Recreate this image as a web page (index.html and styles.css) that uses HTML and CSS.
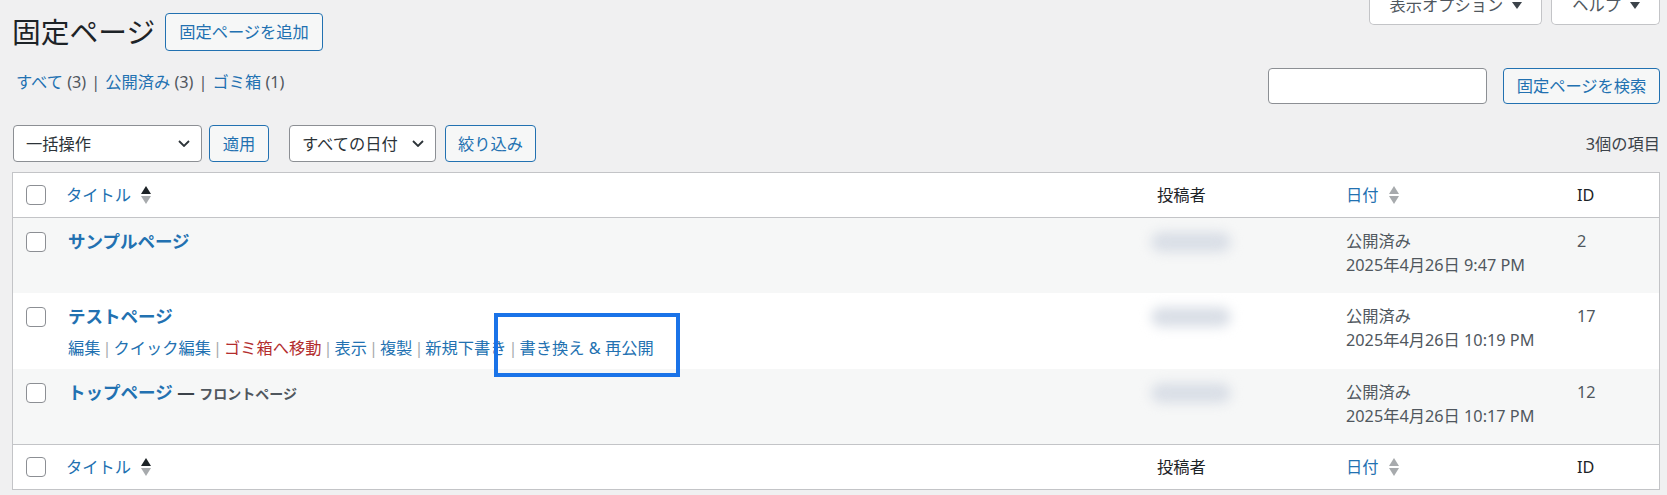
FILE: index.html
```html
<!DOCTYPE html>
<html lang="ja">
<head>
    <meta charset="UTF-8">
    <title>固定ページ</title>
    <link rel="stylesheet" href="styles.css">
</head>
<body>
<div class="wrap">
    <!-- Cabeçalho da página -->
    <div class="page-head">
        <h1 class="page-title">固定ページ</h1>
        <a class="title-action" href="#">固定ページを追加</a>
        <div class="screen-meta">
            <button class="meta-toggle">表示オプション<svg class="meta-arrow" viewBox="0 0 10 7"><path d="M0 0h10L5 7z"/></svg></button>
            <button class="meta-toggle">ヘルプ<svg class="meta-arrow" viewBox="0 0 10 7"><path d="M0 0h10L5 7z"/></svg></button>
        </div>
    </div>

    <div class="views-row">
        <ul class="subsubsub">
            <li><a href="#">すべて <span class="count">(3)</span></a><span class="sep">|</span></li>
            <li><a href="#">公開済み <span class="count">(3)</span></a><span class="sep">|</span></li>
            <li><a href="#">ゴミ箱 <span class="count">(1)</span></a></li>
        </ul>
        <form class="search-box">
            <input type="search" class="search-input">
            <button type="button" class="btn search-btn">固定ページを検索</button>
        </form>
    </div>

    <div class="tablenav">
        <div class="fake-select bulk">一括操作<svg class="chev" viewBox="0 0 12 7"><path d="M1 1l5 5 5-5"/></svg></div>
        <button class="btn apply-btn">適用</button>
        <div class="fake-select dates">すべての日付<svg class="chev" viewBox="0 0 12 7"><path d="M1 1l5 5 5-5"/></svg></div>
        <button class="btn filter-btn">絞り込み</button>
        <span class="num-items">3個の項目</span>
    </div>

    <table class="list-table">
        <thead>
            <tr>
                <th class="col-cb"><span class="cb"></span></th>
                <th class="col-title"><a href="#" class="sort-link">タイトル<svg class="sort-ind" viewBox="0 0 10 18"><path class="up" d="M5 0l5 8H0z"/><path class="down" d="M0 10h10l-5 8z"/></svg></a></th>
                <th class="col-author">投稿者</th>
                <th class="col-date"><a href="#" class="sort-link">日付<svg class="sort-ind" viewBox="0 0 10 18"><path class="down" d="M5 0l5 8H0z"/><path class="down" d="M0 10h10l-5 8z"/></svg></a></th>
                <th class="col-id">ID</th>
            </tr>
        </thead>
        <tbody>
            <tr class="alt">
                <td class="col-cb"><span class="cb"></span></td>
                <td class="col-title"><strong><a href="#" class="row-title">サンプルページ</a></strong></td>
                <td class="col-author"><span class="blurred"></span></td>
                <td class="col-date">公開済み<br>2025年4月26日 9:47 PM</td>
                <td class="col-id">2</td>
            </tr>
            <tr>
                <td class="col-cb"><span class="cb"></span></td>
                <td class="col-title">
                    <strong><a href="#" class="row-title">テストページ</a></strong>
                    <div class="row-actions">
                        <a href="#">編集</a><span class="sep">|</span><a href="#">クイック編集</a><span class="sep">|</span><a href="#" class="trash">ゴミ箱へ移動</a><span class="sep">|</span><a href="#">表示</a><span class="sep">|</span><a href="#">複製</a><span class="sep">|</span><a href="#">新規下書き</a><span class="sep">|</span><a href="#">書き換え &amp; 再公開</a>
                    </div>
                </td>
                <td class="col-author"><span class="blurred"></span></td>
                <td class="col-date">公開済み<br>2025年4月26日 10:19 PM</td>
                <td class="col-id">17</td>
            </tr>
            <tr class="alt">
                <td class="col-cb"><span class="cb"></span></td>
                <td class="col-title"><strong><a href="#" class="row-title">トップページ</a><span class="dash"> — </span><span class="post-state">フロントページ</span></strong></td>
                <td class="col-author"><span class="blurred"></span></td>
                <td class="col-date">公開済み<br>2025年4月26日 10:17 PM</td>
                <td class="col-id">12</td>
            </tr>
        </tbody>
        <tfoot>
            <tr>
                <th class="col-cb"><span class="cb"></span></th>
                <th class="col-title"><a href="#" class="sort-link">タイトル<svg class="sort-ind" viewBox="0 0 10 18"><path class="up" d="M5 0l5 8H0z"/><path class="down" d="M0 10h10l-5 8z"/></svg></a></th>
                <th class="col-author">投稿者</th>
                <th class="col-date"><a href="#" class="sort-link">日付<svg class="sort-ind" viewBox="0 0 10 18"><path class="down" d="M5 0l5 8H0z"/><path class="down" d="M0 10h10l-5 8z"/></svg></a></th>
                <th class="col-id">ID</th>
            </tr>
        </tfoot>
    </table>
</div>

<!-- Destaque em volta da ação -->
<div class="callout"></div>
</body>
</html>
```

FILE: styles.css
```css
/* Base */
body {
    margin: 0;
    position: relative;
    background-color: #f0f0f1;
    color: #3c434a;
    font-family: "Noto Sans", "Noto Sans CJK JP", sans-serif;
    font-size: 16.25px;
    line-height: 24px;
    overflow: hidden;
}
a {
    color: #2271b1;
    text-decoration: none;
}
.wrap {
    padding: 0 7px 0 12px;
}

/* Cabeçalho */
.page-head {
    display: flex;
    align-items: flex-start;
}
.page-title {
    margin: 13px 0 0 0;
    font-size: 28.75px;
    font-weight: 400;
    line-height: 38px;
    color: #1d2327;
}
.title-action {
    margin: 13px 0 0 10px;
    height: 38px;
    box-sizing: border-box;
    padding: 0 13px;
    line-height: 36px;
    border: 1px solid #2271b1;
    border-radius: 4px;
    background-color: #f6f7f7;
    font-size: 16.25px;
}
.screen-meta {
    display: flex;
    gap: 9px;
    margin: -13px 0 0 auto;
}
.meta-toggle {
    display: flex;
    align-items: flex-start;
    height: 38px;
    box-sizing: border-box;
    padding: 6px 19px 0 20px;
    background-color: #fff;
    border: 1px solid #c3c4c7;
    border-top: none;
    border-radius: 0 0 5px 5px;
    font-family: inherit;
    font-size: 16.25px;
    line-height: 24px;
    color: #50575e;
    white-space: nowrap;
}
.meta-arrow {
    flex: none;
    width: 10px;
    height: 7px;
    margin: 9px 0 0 9px;
    fill: #3c434a;
}

/* Filtros e busca */
.views-row {
    display: flex;
    align-items: flex-start;
    margin-top: 17px;
}
.subsubsub {
    display: flex;
    list-style: none;
    margin: 0;
    padding: 2px 0 0 4px;
    color: #50575e;
}
.subsubsub .sep {
    margin: 0 5px;
    color: #50575e;
}
.subsubsub .count {
    color: #50575e;
}
.search-box {
    display: flex;
    gap: 16px;
    margin: 0 0 0 auto;
}
.search-input {
    width: 219px;
    height: 36px;
    box-sizing: border-box;
    border: 1px solid #8c8f94;
    border-radius: 4px;
    background-color: #fff;
    margin: 0;
}
.btn {
    height: 37px;
    box-sizing: border-box;
    padding: 0 11px;
    border: 1px solid #2271b1;
    border-radius: 4px;
    background-color: #f6f7f7;
    color: #2271b1;
    font-family: inherit;
    font-size: 16.25px;
    line-height: 24px;
}
.search-btn {
    height: 36px;
    width: 157px;
}

.tablenav {
    display: flex;
    align-items: center;
    margin-top: 21px;
}
.fake-select {
    display: flex;
    align-items: center;
    justify-content: space-between;
    height: 37px;
    box-sizing: border-box;
    padding: 0 11px 0 12px;
    border: 1px solid #8c8f94;
    border-radius: 4px;
    background-color: #fff;
    color: #2c3338;
}
.bulk {
    width: 189px;
    margin: 0 7px 0 1px;
}
.apply-btn {
    width: 60px;
}
.dates {
    width: 147px;
    margin: 0 9px 0 20px;
}
.chev {
    width: 12px;
    height: 7px;
    fill: none;
    stroke: #2c3338;
    stroke-width: 1.8;
}
.filter-btn {
    width: 91px;
}
.num-items {
    margin-left: auto;
    color: #3c434a;
}

/* Tabela */
.list-table {
    width: 100%;
    margin-top: 10px;
    border: 1px solid #c3c4c7;
    border-spacing: 0;
    table-layout: fixed;
    background-color: #fff;
}
.list-table th,
.list-table td {
    box-sizing: border-box;
    text-align: left;
    vertical-align: top;
    font-weight: 400;
}
.list-table th {
    padding: 10px 12px;
    color: #1d2327;
}
.list-table th.col-title {
    padding-left: 10px;
}
.list-table thead th {
    border-bottom: 1px solid #c3c4c7;
}
.list-table tfoot th {
    border-top: 1px solid #c3c4c7;
}
.list-table td {
    padding: 11px 12px 9px;
    color: #50575e;
}
.list-table tbody tr {
    height: 75px;
}
.list-table tr.alt {
    background-color: #f6f7f7;
}
.col-cb {
    width: 43px;
}
.col-author {
    width: 189px;
}
.col-date {
    width: 231px;
}
.col-id {
    width: 94px;
}
.list-table th.col-cb {
    padding: 12px 0 0 13px;
}
.list-table td.col-cb {
    padding: 14px 0 0 13px;
}
.cb {
    display: block;
    width: 20px;
    height: 20px;
    box-sizing: border-box;
    border: 1px solid #8c8f94;
    border-radius: 4px;
    background-color: #fff;
}
.sort-link {
    display: inline-flex;
    align-items: center;
}
.sort-ind {
    width: 10px;
    height: 18px;
    margin-left: 10px;
}
.sort-ind .up {
    fill: #1d2327;
}
.sort-ind .down {
    fill: #a7aaad;
}
.row-title {
    font-size: 17.5px;
    font-weight: 600;
}
.dash {
    font-size: 17.5px;
    color: #3c434a;
}
.post-state {
    font-size: 14px;
    font-weight: 600;
    color: #50575e;
}
.row-actions {
    margin-top: 7px;
    white-space: nowrap;
}
.row-actions .sep {
    margin: 0 2px;
    color: #a7aaad;
}
.row-actions .trash {
    color: #b32d2e;
}
.blurred {
    display: block;
    width: 80px;
    height: 20px;
    margin: 3px 0 0 -6px;
    border-radius: 10px;
    background-color: #d9dee6;
    filter: blur(6px);
}

/* Destaque */
.callout {
    position: absolute;
    left: 494px;
    top: 313px;
    width: 186px;
    height: 64px;
    box-sizing: border-box;
    border: 4px solid #1a73e8;
}
```
